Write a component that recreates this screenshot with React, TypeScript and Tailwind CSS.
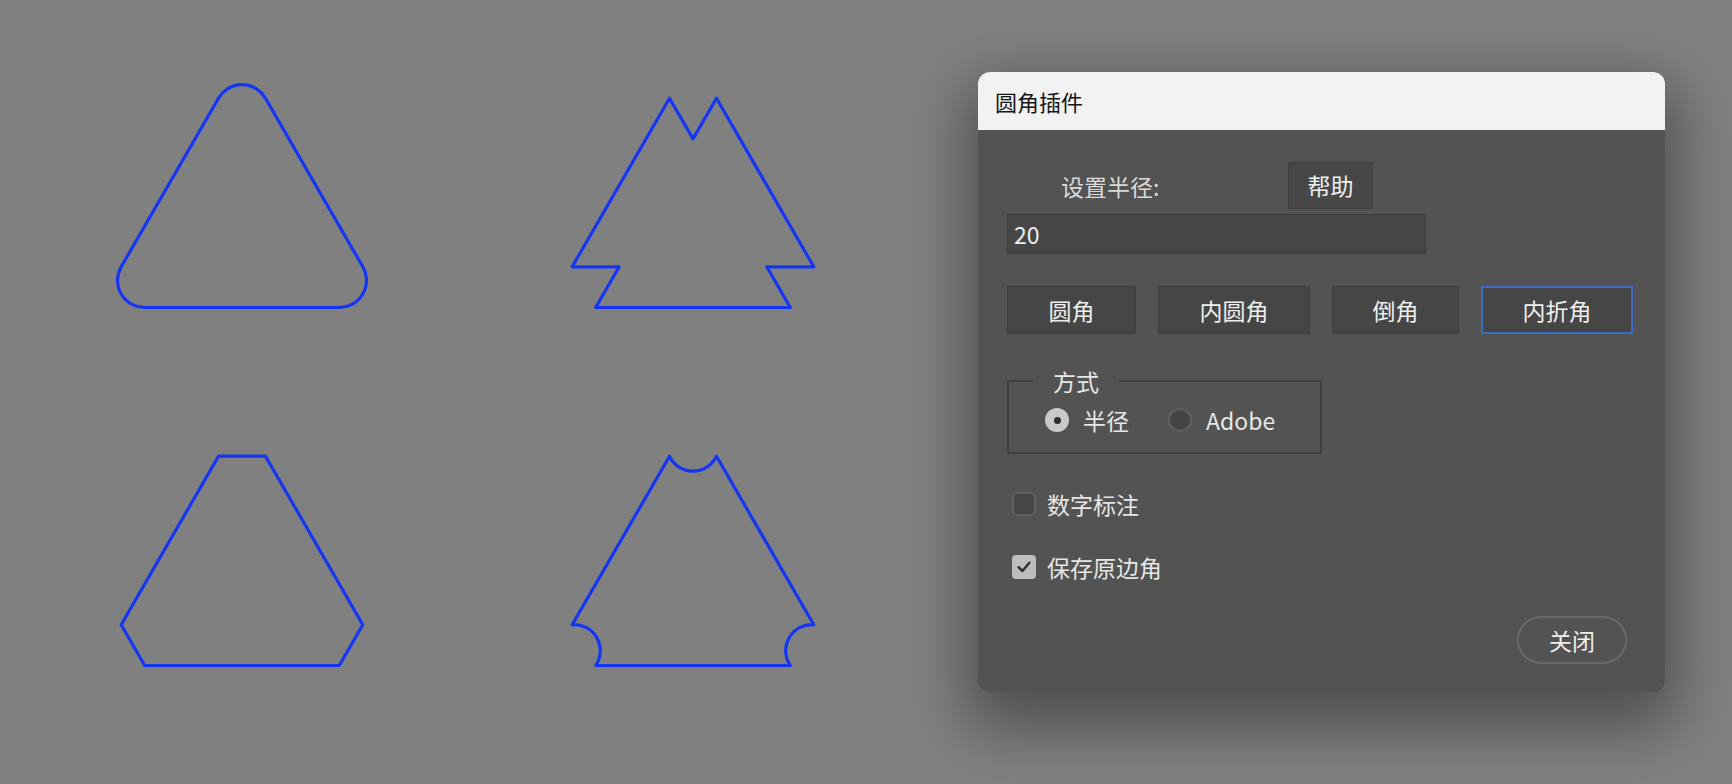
import React from "react";

type Pt = [number, number];
type Corner = "round" | "fold" | "chamfer" | "inner";

const HALF = 144.3;
const HEIGHT = 250;
const CUT = 47;

function trianglePath(cx: number, top: number, corner: Corner) {
  const pts: Pt[] = [
    [cx, top],
    [cx + HALF, top + HEIGHT],
    [cx - HALF, top + HEIGHT],
  ];

  const toward = (a: Pt, b: Pt): Pt => {
    const dx = b[0] - a[0];
    const dy = b[1] - a[1];
    const len = Math.hypot(dx, dy);
    return [a[0] + (dx / len) * CUT, a[1] + (dy / len) * CUT];
  };

  const f = (p: Pt) => `${p[0].toFixed(2)} ${p[1].toFixed(2)}`;
  const r = CUT / Math.sqrt(3);
  let d = "";

  pts.forEach((v, i) => {
    const prev = pts[(i + pts.length - 1) % pts.length];
    const next = pts[(i + 1) % pts.length];
    const p1 = toward(v, prev);
    const p2 = toward(v, next);

    d += i === 0 ? `M ${f(p1)} ` : `L ${f(p1)} `;

    if (corner === "round") {
      d += `A ${r.toFixed(2)} ${r.toFixed(2)} 0 0 1 ${f(p2)} `;
    } else if (corner === "fold") {
      const mirrored: Pt = [p1[0] + p2[0] - v[0], p1[1] + p2[1] - v[1]];
      d += `L ${f(mirrored)} L ${f(p2)} `;
    } else if (corner === "chamfer") {
      d += `L ${f(p2)} `;
    } else {
      d += `A 26 26 0 0 0 ${f(p2)} `;
    }
  });

  return d + "Z";
}

function Radio({ checked, label }: { checked: boolean; label: string }) {
  return (
    <label className="flex items-center gap-[14px]">
      {checked ? (
        <span className="flex h-[24px] w-[24px] items-center justify-center rounded-full bg-[#c9c9c9]">
          <span className="h-[7px] w-[7px] rounded-full bg-[#2e2e2e]" />
        </span>
      ) : (
        <span className="h-[24px] w-[24px] rounded-full border-2 border-[#5f5f5f] bg-[#444444]" />
      )}
      <span>{label}</span>
    </label>
  );
}

function Checkbox({ checked, label }: { checked: boolean; label: string }) {
  return (
    <label className="flex h-[32px] items-center gap-[11px] pl-[5px]">
      {checked ? (
        <span className="flex h-[24px] w-[24px] items-center justify-center rounded-[4px] bg-[#bdbdbd]">
          <svg viewBox="0 0 16 16" className="h-[18px] w-[18px]" fill="none" stroke="#2f2f2f" strokeWidth="2.2" strokeLinecap="round" strokeLinejoin="round">
            <path d="M3.2 8.2 L6.6 11.6 L12.8 4.2" />
          </svg>
        </span>
      ) : (
        <span className="h-[24px] w-[24px] rounded-[4px] border-2 border-[#606060] bg-[#464646]" />
      )}
      <span>{label}</span>
    </label>
  );
}

const actions = [
  { label: "圆角", width: "w-[129px]", active: false },
  { label: "内圆角", width: "w-[152px]", active: false },
  { label: "倒角", width: "w-[127px]", active: false },
  { label: "内折角", width: "w-[152px]", active: true },
];

export default function App() {
  return (
    <div
      className="flex h-[784px] w-[1732px] overflow-hidden bg-[#808080]"
      style={{ fontFamily: '"Noto Sans CJK SC", "Noto Sans", sans-serif' }}
    >
      <svg width="978" height="784" className="shrink-0" fill="none" stroke="#1535f5" strokeWidth="3.2" strokeLinejoin="round">
        <path d={trianglePath(242, 57.5, "round")} />
        <path d={trianglePath(693, 57.5, "fold")} />
        <path d={trianglePath(242, 415.5, "chamfer")} />
        <path d={trianglePath(693, 415.5, "inner")} />
      </svg>

      <section className="mt-[72px] flex h-[620px] w-[687px] shrink-0 flex-col overflow-hidden rounded-[12px] bg-[#535353] text-[23px] leading-none text-[#e6e6e6] shadow-[0_24px_60px_12px_rgba(0,0,0,0.38)]">
        <header className="flex h-[58px] shrink-0 items-center bg-[#f2f2f2] pl-[17px] text-[22px] text-[#151515]">
          圆角插件
        </header>

        <div className="flex flex-1 flex-col px-[29px] pt-[32px]">
          <div className="flex items-center">
            <span className="w-[281px] pl-[54px] pt-[2px] text-[#d9d9d9]">设置半径:</span>
            <button className="h-[47px] w-[85px] border border-[#3e3e3e] bg-[#474747] text-[#efefef]" type="button">
              帮助
            </button>
          </div>

          <div className="mt-[5px] flex h-[40px] w-[419px] items-center border border-[#3c3c3c] bg-[#464646] pl-[6px] text-[#eeeeee]">
            20
          </div>

          <div className="mt-[32px] flex gap-[22px]">
            {actions.map((action) => (
              <button
                key={action.label}
                className={`h-[48px] ${action.width} bg-[#464646] text-[#efefef] ${
                  action.active ? "border-2 border-[#3b6cc7]" : "border border-[#3d3d3d]"
                }`}
                type="button"
              >
                {action.label}
              </button>
            ))}
          </div>

          <fieldset className="mt-[31px] w-[315px] border-2 border-[#3f3f3f] px-[36px] pb-[20px]">
            <legend className="ml-[-12px] h-[32px] px-[20px] leading-[32px]">方式</legend>
            <div className="mt-[11px] flex h-[24px] items-center gap-[39px]">
              <Radio checked label="半径" />
              <Radio checked={false} label="Adobe" />
            </div>
          </fieldset>

          <div className="mt-[34px] flex flex-col gap-[31px]">
            <Checkbox checked={false} label="数字标注" />
            <Checkbox checked label="保存原边角" />
          </div>

          <div className="mt-[33px] flex justify-end pr-[9px]">
            <button className="h-[48px] w-[110px] rounded-full border-2 border-[#6a6a6a] bg-[#535353] text-[#efefef]" type="button">
              关闭
            </button>
          </div>
        </div>
      </section>
    </div>
  );
}
